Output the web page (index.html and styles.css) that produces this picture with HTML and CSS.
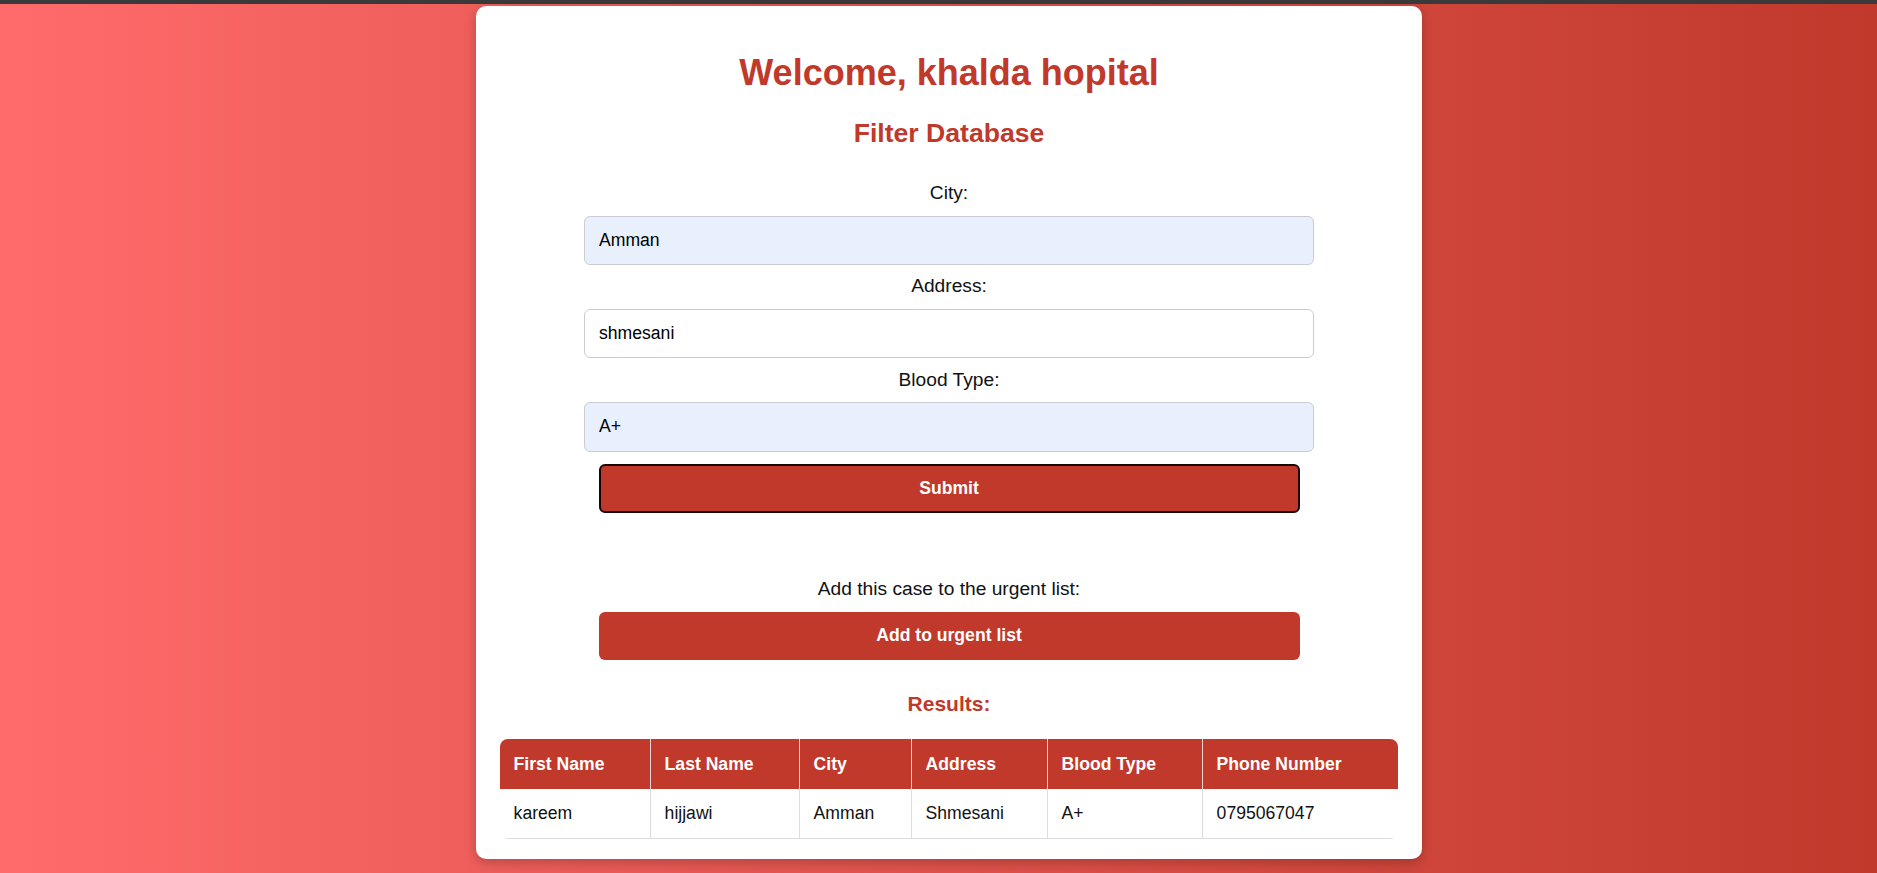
FILE: index.html
```html
<!DOCTYPE html>
<html lang="en">
<head>
<meta charset="utf-8">
<title>Hospital Dashboard</title>
<link rel="stylesheet" href="styles.css">
</head>
<body>
<div class="topbar"></div>
<main class="page">
  <section class="card">
    <h1 class="title">Welcome, khalda hopital</h1>
    <h2 class="subtitle">Filter Database</h2>
    <form class="filter-form">
      <label class="field-label" for="city">City:</label>
      <input class="field-input autofill" id="city" type="text" value="Amman">
      <label class="field-label" for="address">Address:</label>
      <input class="field-input" id="address" type="text" value="shmesani">
      <label class="field-label" for="blood">Blood Type:</label>
      <input class="field-input autofill" id="blood" type="text" value="A+">
      <button class="btn btn-focused" type="button">Submit</button>
    </form>
    <div class="urgent">
      <p class="field-label urgent-label">Add this case to the urgent list:</p>
      <button class="btn" type="button">Add to urgent list</button>
    </div>
    <h3 class="results-title">Results:</h3>
    <table class="results">
      <thead>
        <tr>
          <th class="c1">First Name</th>
          <th class="c2">Last Name</th>
          <th class="c3">City</th>
          <th class="c4">Address</th>
          <th class="c5">Blood Type</th>
          <th class="c6">Phone Number</th>
        </tr>
      </thead>
      <tbody>
        <tr>
          <td>kareem</td>
          <td>hijjawi</td>
          <td>Amman</td>
          <td>Shmesani</td>
          <td>A+</td>
          <td>0795067047</td>
        </tr>
      </tbody>
    </table>
  </section>
</main>
</body>
</html>
```
FILE: styles.css
```css
* { box-sizing: border-box; }

html, body {
  margin: 0;
  padding: 0;
}

body {
  height: 873px;
  overflow: hidden;
  font-family: "Liberation Sans", Arial, sans-serif;
  background: linear-gradient(to right, #ff6b6b, #c0392b);
  color: #222;
}

.topbar {
  height: 4px;
  background: #3a3a3a;
}

.page {
  display: flex;
  justify-content: center;
  padding: 2px 0 0 21px;
}

.card {
  width: 946px;
  height: 853px;
  background: #fff;
  border-radius: 10px;
  box-shadow: 0 4px 12px rgba(0, 0, 0, 0.22);
  padding: 0 24px;
  display: flex;
  flex-direction: column;
  align-items: center;
}

.title {
  margin: 46px 0 0;
  font-size: 36px;
  line-height: 41px;
  font-weight: bold;
  color: #c0392b;
  text-align: center;
}

.subtitle {
  margin: 25px 0 0;
  font-size: 26.6px;
  line-height: 31px;
  font-weight: bold;
  color: #c0392b;
  text-align: center;
}

.filter-form {
  margin-top: 33px;
  width: 730px;
  display: flex;
  flex-direction: column;
  align-items: center;
}

.field-label {
  display: block;
  margin: 0 0 11.5px;
  font-size: 19.2px;
  line-height: 22px;
  color: #111;
  text-align: center;
}

.field-input {
  display: block;
  width: 730px;
  height: 49.3px;
  margin: 0 0 10.6px;
  padding: 0 14px;
  border: 1px solid #c9cdd3;
  border-radius: 6px;
  background: #fff;
  font-family: "Liberation Sans", Arial, sans-serif;
  font-size: 17.6px;
  color: #000;
  outline: none;
}

.field-input.autofill {
  background: #e8f0fe;
}

.btn {
  display: block;
  width: 701px;
  height: 48.5px;
  border: 0;
  border-radius: 6px;
  background: #c0392b;
  color: #fff;
  font-family: "Liberation Sans", Arial, sans-serif;
  font-size: 17.6px;
  font-weight: bold;
  cursor: pointer;
}

.btn-focused {
  margin-top: 2px;
  height: 49px;
  border: 2px solid #1a0606;
}

.urgent {
  margin-top: 64.7px;
  display: flex;
  flex-direction: column;
  align-items: center;
}

.urgent-label {
  margin-bottom: 11.7px;
}

.results-title {
  margin: 31.5px 0 0;
  font-size: 21px;
  line-height: 24px;
  font-weight: bold;
  color: #c0392b;
  text-align: center;
}

.results {
  margin-top: 23.8px;
  width: 898px;
  table-layout: fixed;
  border-collapse: separate;
  border-spacing: 0;
  border-radius: 8px;
  overflow: hidden;
  font-size: 17.6px;
}

.results th,
.results td {
  padding: 14.4px 13.6px;
  line-height: 20.5px;
  text-align: left;
  border-right: 1px solid #dddddd;
}

.results th:last-child,
.results td:last-child {
  border-right: 0;
}

.results th {
  background: #c0392b;
  color: #fff;
  font-weight: bold;
  border-right-color: #f2d6d3;
}

.results td {
  background: #fff;
  color: #111;
  border-bottom: 1px solid #dddddd;
  height: 49px;
}

.c1 { width: 151px; }
.c2 { width: 149px; }
.c3 { width: 112px; }
.c4 { width: 136px; }
.c5 { width: 155px; }
.c6 { width: 195px; }
```
